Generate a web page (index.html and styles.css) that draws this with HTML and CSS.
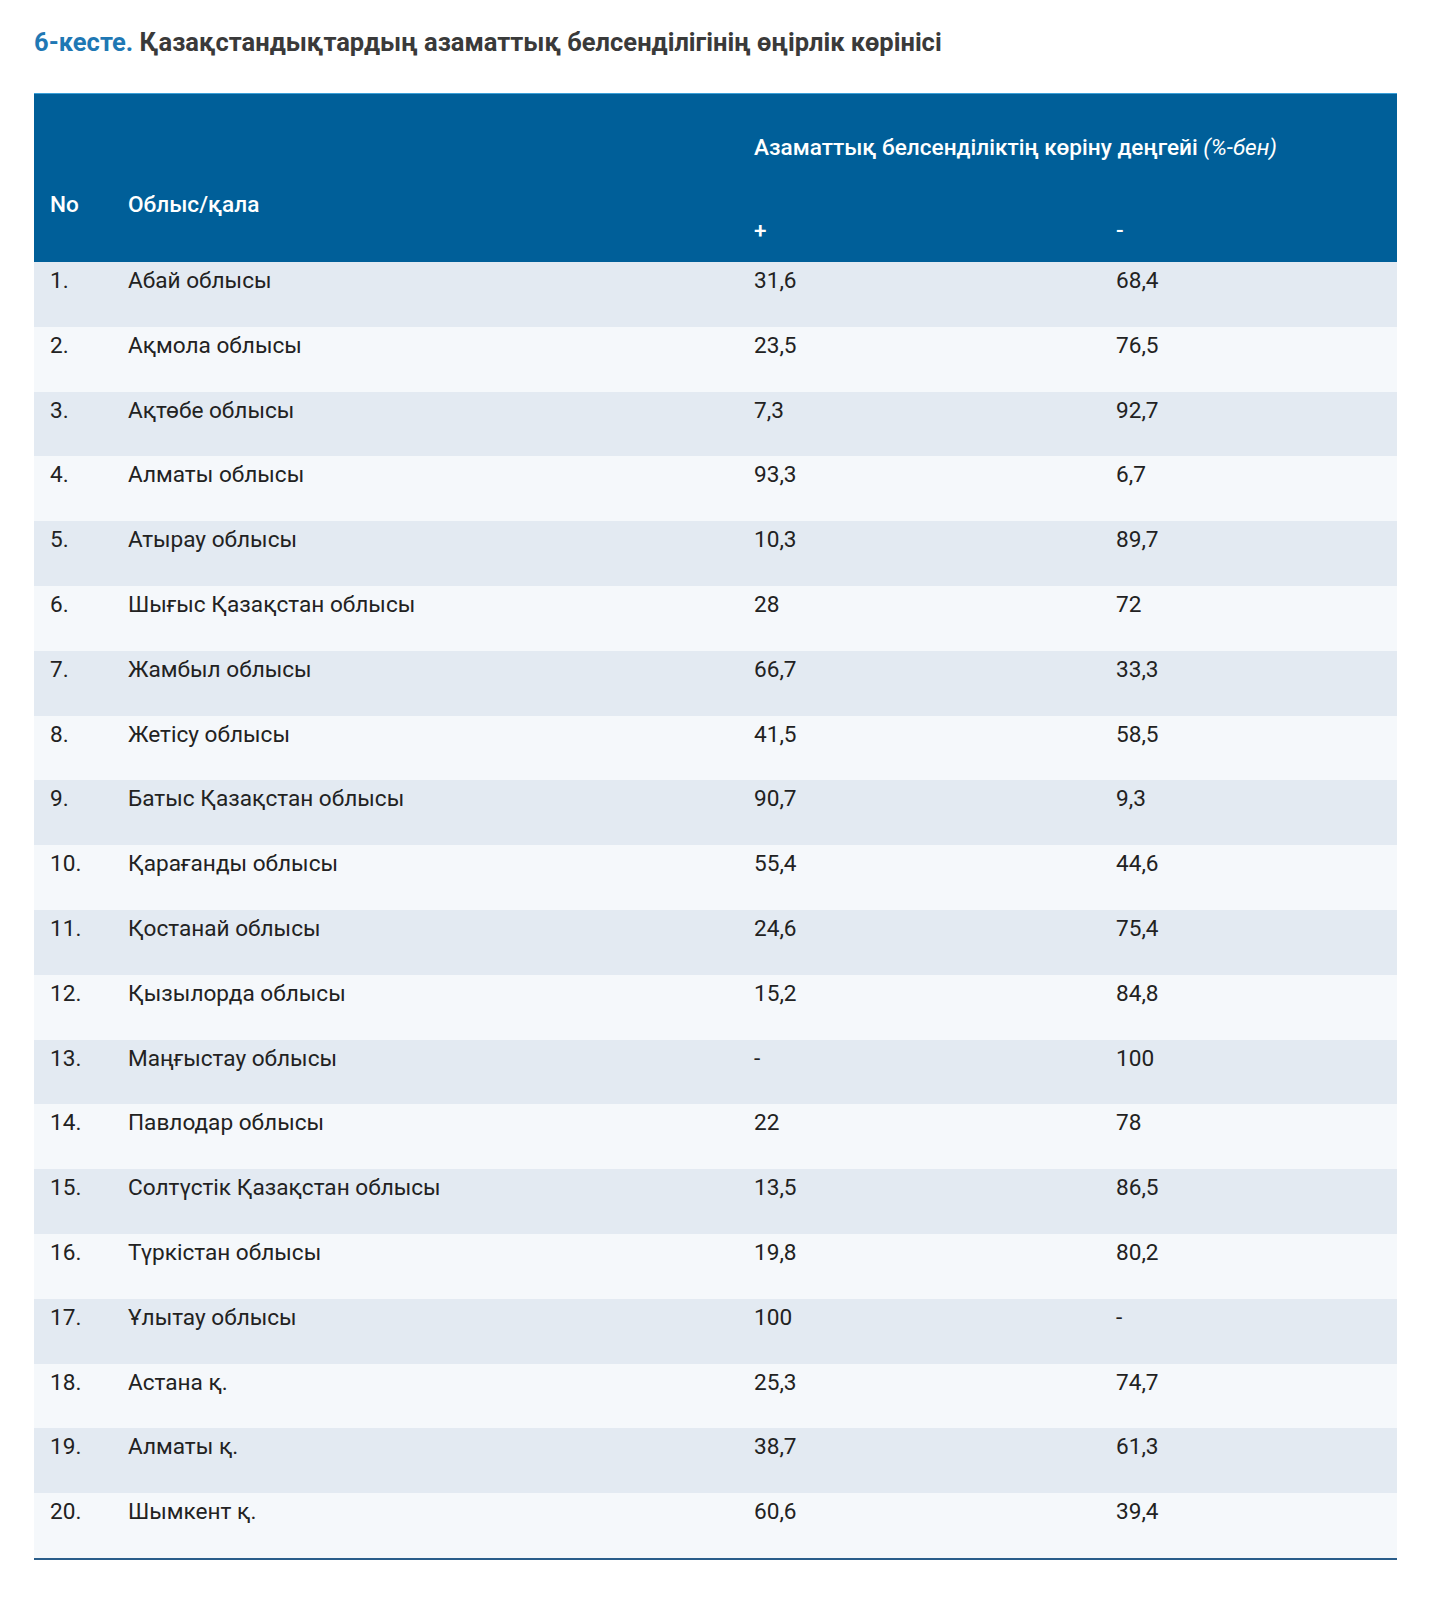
FILE: index.html
```html
<!DOCTYPE html>
<html lang="kk">

<head>
    <meta charset="UTF-8">
    <title>6-кесте</title>
    <link rel="stylesheet" href="styles.css">
</head>

<body>

    <h2 class="table-title"><span class="table-num">6-кесте.</span> Қазақстандықтардың азаматтық белсенділігінің өңірлік көрінісі</h2>

    <table class="data-table">
        <colgroup>
            <col class="col-no">
            <col class="col-name">
            <col class="col-plus">
            <col class="col-minus">
        </colgroup>
        <thead>
            <tr>
                <th class="th-side" rowspan="2">No</th>
                <th class="th-side" rowspan="2">Облыс/қала</th>
                <th class="th-group" colspan="2">Азаматтық белсенділіктің көріну деңгейі <i>(%-бен)</i></th>
            </tr>
            <tr>
                <th class="th-sub">+</th>
                <th class="th-sub">-</th>
            </tr>
        </thead>
        <tbody>
            <tr><td>1.</td><td>Абай облысы</td><td>31,6</td><td>68,4</td></tr>
            <tr><td>2.</td><td>Ақмола облысы</td><td>23,5</td><td>76,5</td></tr>
            <tr><td>3.</td><td>Ақтөбе облысы</td><td>7,3</td><td>92,7</td></tr>
            <tr><td>4.</td><td>Алматы облысы</td><td>93,3</td><td>6,7</td></tr>
            <tr><td>5.</td><td>Атырау облысы</td><td>10,3</td><td>89,7</td></tr>
            <tr><td>6.</td><td>Шығыс Қазақстан облысы</td><td>28</td><td>72</td></tr>
            <tr><td>7.</td><td>Жамбыл облысы</td><td>66,7</td><td>33,3</td></tr>
            <tr><td>8.</td><td>Жетісу облысы</td><td>41,5</td><td>58,5</td></tr>
            <tr><td>9.</td><td>Батыс Қазақстан облысы</td><td>90,7</td><td>9,3</td></tr>
            <tr><td>10.</td><td>Қарағанды облысы</td><td>55,4</td><td>44,6</td></tr>
            <tr><td>11.</td><td>Қостанай облысы</td><td>24,6</td><td>75,4</td></tr>
            <tr><td>12.</td><td>Қызылорда облысы</td><td>15,2</td><td>84,8</td></tr>
            <tr><td>13.</td><td>Маңғыстау облысы</td><td>-</td><td>100</td></tr>
            <tr><td>14.</td><td>Павлодар облысы</td><td>22</td><td>78</td></tr>
            <tr><td>15.</td><td>Солтүстік Қазақстан облысы</td><td>13,5</td><td>86,5</td></tr>
            <tr><td>16.</td><td>Түркістан облысы</td><td>19,8</td><td>80,2</td></tr>
            <tr><td>17.</td><td>Ұлытау облысы</td><td>100</td><td>-</td></tr>
            <tr><td>18.</td><td>Астана қ.</td><td>25,3</td><td>74,7</td></tr>
            <tr><td>19.</td><td>Алматы қ.</td><td>38,7</td><td>61,3</td></tr>
            <tr><td>20.</td><td>Шымкент қ.</td><td>60,6</td><td>39,4</td></tr>
        </tbody>
    </table>

</body>

</html>
```

FILE: styles.css
```css
body {
    font-family: Roboto, "Noto Sans", sans-serif;
    margin: 0;
    padding: 0 42px 0 34px;
    background-color: #FFFFFF;
    color: #222222;
}

.table-title {
    margin: 26px 0 35px 0;
    font-size: 25.5px;
    line-height: 32px;
    font-weight: 700;
    color: #3A3A3A;
}

.table-num {
    color: #1F78B4;
}

.data-table {
    width: 100%;
    table-layout: fixed;
    border-collapse: collapse;
    font-size: 22.6px;
    line-height: 26px;
    border-bottom: 2px solid #2A5D8A;
}

.col-no {
    width: 78px;
}

.col-name {
    width: 626px;
}

.col-plus {
    width: 362px;
}

.data-table thead {
    background-color: #005F99;
    color: #FFFFFF;
}

.data-table thead tr:first-child {
    border-top: 1px solid #3A9FD8;
}

.data-table th {
    text-align: left;
    font-weight: 500;
    padding: 0 16px;
}

.data-table th i {
    font-weight: 400;
}

.th-side {
    vertical-align: middle;
    padding-top: 54px !important;
}

.th-group {
    padding-top: 41px !important;
    padding-bottom: 30px !important;
    vertical-align: top;
}

.th-sub {
    padding-top: 27px !important;
    padding-bottom: 18px !important;
    vertical-align: top;
}

.data-table td {
    padding: 6px 16px 32.8px 16px;
    vertical-align: top;
}

.data-table tbody tr:nth-child(odd) {
    background-color: #E3EAF2;
}

.data-table tbody tr:nth-child(even) {
    background-color: #F5F8FB;
}
```
